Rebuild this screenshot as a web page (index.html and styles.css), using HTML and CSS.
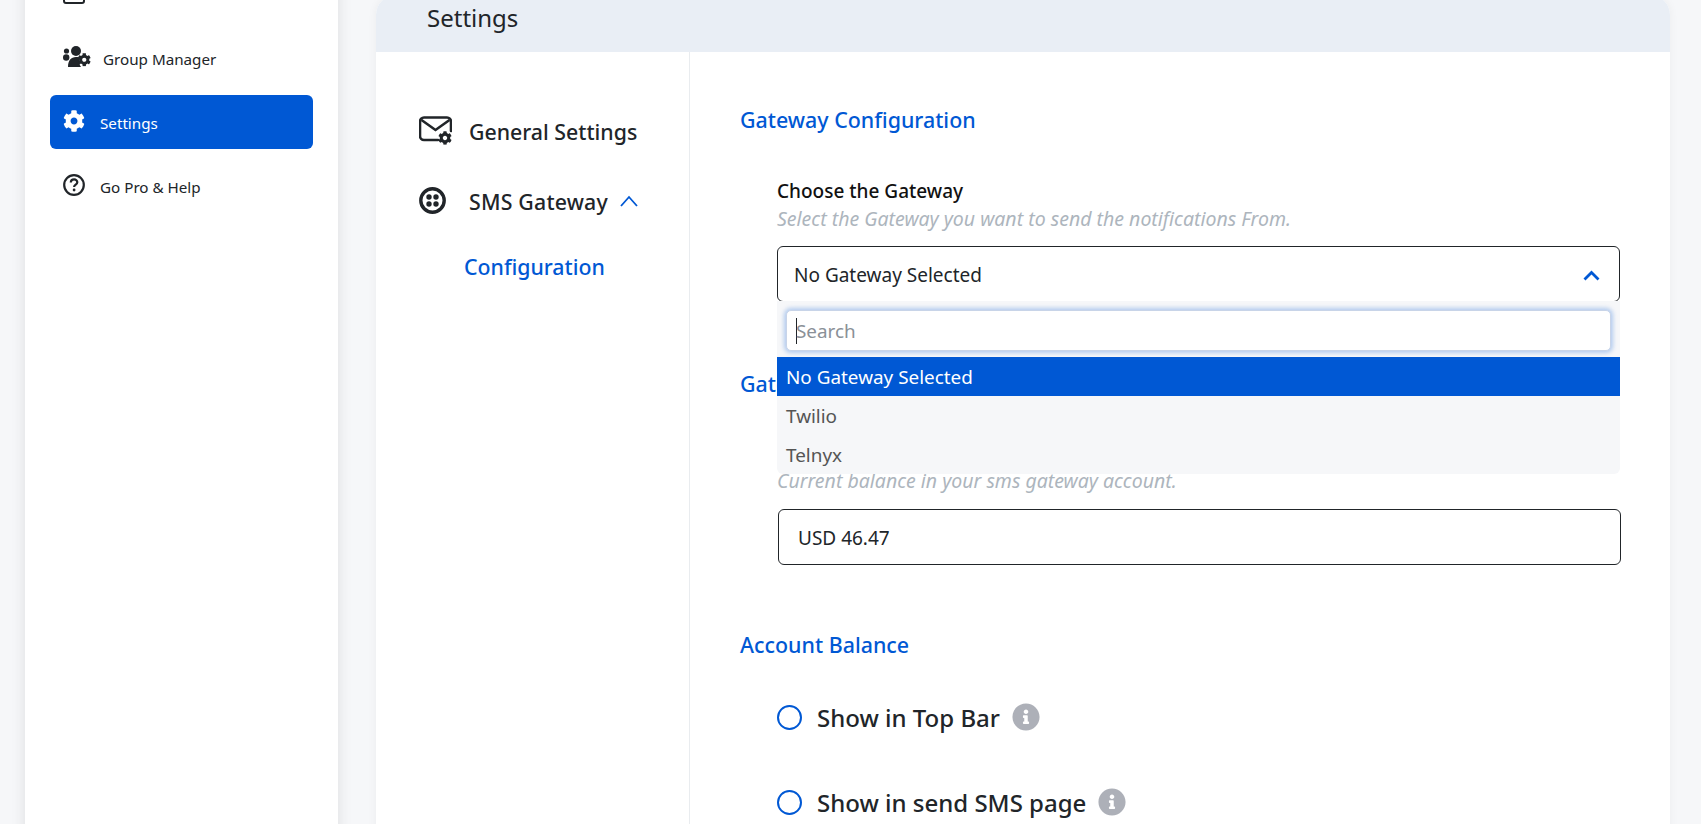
FILE: index.html
```html
<!DOCTYPE html>
<html lang="en">
<head>
    <meta charset="UTF-8">
    <meta name="viewport" content="width=device-width, initial-scale=1.0">
    <title>Settings</title>
    <link rel="stylesheet" href="styles.css">
</head>
<body>

<svg class="iconDefs" width="0" height="0">
    <symbol id="cog" viewBox="0 0 512 512">
        <path d="M487.4 315.7l-42.6-24.6c4.3-23.2 4.3-47 0-70.2l42.6-24.6c4.9-2.8 7.1-8.6 5.5-14-11.1-35.6-30-67.8-54.7-94.6-3.8-4.1-10-5.1-14.8-2.3L380.8 110c-17.9-15.4-38.5-27.3-60.8-35.1V25.8c0-5.6-3.9-10.5-9.4-11.7-36.7-8.2-74.3-7.8-109.2 0-5.5 1.2-9.4 6.1-9.4 11.7V75c-22.2 7.9-42.8 19.8-60.8 35.1L88.7 85.5c-4.9-2.8-11-1.9-14.8 2.3-24.7 26.7-43.6 58.9-54.7 94.6-1.7 5.4.6 11.2 5.5 14L67.3 221c-4.3 23.2-4.3 47 0 70.2l-42.6 24.6c-4.9 2.8-7.1 8.6-5.5 14 11.1 35.6 30 67.8 54.7 94.6 3.8 4.1 10 5.1 14.8 2.3l42.6-24.6c17.9 15.4 38.5 27.3 60.8 35.1v49.2c0 5.6 3.9 10.5 9.4 11.7 36.7 8.2 74.3 7.8 109.2 0 5.5-1.2 9.4-6.1 9.4-11.7v-49.2c22.2-7.9 42.8-19.8 60.8-35.1l42.6 24.6c4.9 2.8 11 1.9 14.8-2.3 24.7-26.7 43.6-58.9 54.7-94.6 1.5-5.5-.7-11.3-5.6-14.1zM256 336c-44.1 0-80-35.9-80-80s35.9-80 80-80 80 35.9 80 80-35.9 80-80 80z" fill="currentColor"/>
    </symbol>
    <symbol id="info" viewBox="0 0 512 512">
        <path d="M256 8C119 8 8 119.1 8 256c0 137 111 248 248 248s248-111 248-248C504 119.1 393 8 256 8zm0 110c23.2 0 42 18.8 42 42s-18.8 42-42 42-42-18.8-42-42 18.8-42 42-42zm56 254c0 6.6-5.4 12-12 12h-88c-6.6 0-12-5.4-12-12v-24c0-6.6 5.4-12 12-12h12v-64h-12c-6.6 0-12-5.4-12-12v-24c0-6.6 5.4-12 12-12h64c6.6 0 12 5.4 12 12v100h12c6.6 0 12 5.4 12 12v24z" fill="currentColor"/>
    </symbol>
</svg>

<div class="app">
    <aside class="sidebar">
        <a class="navItem">
            <svg class="navIcon" viewBox="0 0 22 22"><rect x="1" y="1" width="20" height="20" rx="2" fill="none" stroke="currentColor" stroke-width="2"/></svg>
            <span class="navLabel navLabelRaised">Message Log</span>
        </a>
        <a class="navItem">
            <svg class="navIcon groupIcon" viewBox="0 0 28 21">
                <circle cx="3.500" cy="5" r="2.600" fill="currentColor"/>
                <circle cx="3.200" cy="11.500" r="3.200" fill="currentColor"/>
                <circle cx="13" cy="5" r="5" fill="currentColor"/>
                <path d="M5 21c0-6.500 3-10 8-10 2 0 3.500.4 4.500 1-1.500 2.500-1.500 6.500.5 9z" fill="currentColor"/>
                <use href="#cog" x="14.500" y="7" width="13.500" height="13.500"/>
            </svg>
            <span class="navLabel">Group Manager</span>
        </a>
        <a class="navItem navItemActive">
            <svg class="navIcon" viewBox="0 0 22 22"><use href="#cog" width="22" height="22"/></svg>
            <span class="navLabel">Settings</span>
        </a>
        <a class="navItem">
            <svg class="navIcon" viewBox="0 0 22 22">
                <circle cx="11" cy="11" r="9.800" fill="none" stroke="currentColor" stroke-width="2.200"/>
                <path d="M7.800 8.600c0-2 1.500-3.200 3.300-3.200 1.900 0 3.200 1.200 3.200 2.800 0 2.400-3.200 2.400-3.200 4.800" fill="none" stroke="currentColor" stroke-width="2.200"/>
                <circle cx="11.100" cy="16" r="1.400" fill="currentColor"/>
            </svg>
            <span class="navLabel">Go Pro &amp; Help</span>
        </a>
    </aside>

    <main class="card">
        <header class="cardHeader">Settings</header>
        <div class="cardBody">
            <nav class="subNav">
                <div class="subNavItem">
                    <svg class="mailIcon" viewBox="0 0 33 29">
                        <path d="M19 24H5a4 4 0 0 1-4-4V5.500a4 4 0 0 1 4-4h23a4 4 0 0 1 4 4V15" fill="none" stroke="currentColor" stroke-width="2.600" stroke-linecap="round"/>
                        <path d="M2.500 4l14 10 14-10" fill="none" stroke="currentColor" stroke-width="2.600"/>
                        <use href="#cog" x="19" y="15" width="14" height="14"/>
                    </svg>
                    <span>General Settings</span>
                </div>
                <div class="subNavItem subNavGateway">
                    <svg class="twilioIcon" viewBox="0 0 27 27">
                        <circle cx="13.500" cy="13.500" r="11.700" fill="none" stroke="currentColor" stroke-width="3.400"/>
                        <circle cx="10" cy="10" r="2.700" fill="currentColor"/>
                        <circle cx="17" cy="10" r="2.700" fill="currentColor"/>
                        <circle cx="10" cy="17" r="2.700" fill="currentColor"/>
                        <circle cx="17" cy="17" r="2.700" fill="currentColor"/>
                    </svg>
                    <span>SMS Gateway</span>
                    <svg class="subNavChevron" viewBox="0 0 18 12"><path d="M1 11l8-9 8 9" fill="none" stroke="currentColor" stroke-width="1.800"/></svg>
                </div>
                <div class="subNavChild">Configuration</div>
            </nav>

            <section class="content">
                <h2 class="sectionTitle">Gateway Configuration</h2>

                <div class="field fieldGateway">
                    <div class="fieldLabel">Choose the Gateway</div>
                    <div class="fieldHint">Select the Gateway you want to send the notifications From.</div>
                    <div class="selectBox">
                        <span>No Gateway Selected</span>
                        <svg class="selectChevron" viewBox="0 0 17 11"><path d="M1.500 9.500l7-7 7 7" fill="none" stroke="currentColor" stroke-width="2.800"/></svg>
                    </div>
                    <div class="dropdown">
                        <div class="searchWrap">
                            <div class="searchInput"><i class="caret"></i>Search</div>
                        </div>
                        <div class="option optionSelected">No Gateway Selected</div>
                        <div class="option">Twilio</div>
                        <div class="option">Telnyx</div>
                    </div>
                </div>

                <h2 class="sectionTitle titleBalance">Gateway Balance</h2>
                <div class="field fieldBalance">
                    <div class="fieldHint">Current balance in your sms gateway account.</div>
                    <div class="textBox">USD 46.47</div>
                </div>

                <h2 class="sectionTitle titleAccount">Account Balance</h2>
                <div class="radioRow">
                    <i class="radio"></i>
                    <span>Show in Top Bar</span>
                    <svg class="infoIcon"><use href="#info" width="28" height="28"/></svg>
                </div>
                <div class="radioRow">
                    <i class="radio"></i>
                    <span>Show in send SMS page</span>
                    <svg class="infoIcon"><use href="#info" width="28" height="28"/></svg>
                </div>
            </section>
        </div>
    </main>
</div>

</body>
</html>
```

FILE: styles.css
```css
html, body {
    margin: 0;
    padding: 0;
    height: 824px;
    overflow: hidden;
    background-color: #f6f7f9;
    color: #212529;
    font-family: "Noto Sans", "Open Sans", sans-serif;
}

.iconDefs {
    position: absolute;
}

.app {
    display: flex;
    align-items: flex-start;
    gap: 38px;
    margin-top: -33px;
    margin-left: 25px;
}

/* Sidebar */
.sidebar {
    width: 263px;
    height: 920px;
    padding: 0 25px;
    display: flex;
    flex-direction: column;
    gap: 10px;
    flex-shrink: 0;
    background-color: white;
    box-shadow: 0 0 14px rgba(0, 0, 0, 0.1);
}

.navItem {
    height: 54px;
    padding: 1px 0 0 13px;
    box-sizing: border-box;
    display: flex;
    align-items: center;
    gap: 15px;
    border-radius: 6px;
    font-size: 15.2px;
}

.navItemActive {
    background-color: #0058d4;
    color: white;
}

.navIcon {
    width: 22px;
    height: 22px;
    margin-top: -4px;
    flex-shrink: 0;
}

.groupIcon {
    width: 28px;
    height: 21px;
    margin-right: -3px;
}

/* the first row runs off the top of the page */
.navLabelRaised {
    margin-top: -9px;
}

/* Main card */
.card {
    width: 1294px;
    height: 920px;
    margin-top: 28px;
    flex-shrink: 0;
    border-radius: 20px 20px 0 0;
    background-color: white;
    box-shadow: 0 0 10px rgba(0, 0, 0, 0.05);
    overflow: hidden;
}

.cardHeader {
    height: 57px;
    padding: 0 0 19px 51px;
    display: flex;
    align-items: flex-end;
    box-sizing: border-box;
    line-height: 30px;
    background-color: #e9eef5;
    font-size: 24px;
}

.cardBody {
    display: flex;
    height: 100%;
}

.subNav {
    width: 314px;
    padding: 61px 0 0 43px;
    box-sizing: border-box;
    border-right: 1px solid #e9ecef;
    font-size: 21.3px;
    font-weight: 500;
    flex-shrink: 0;
}

.subNavItem {
    height: 36px;
    display: flex;
    align-items: center;
}

.subNavItem span {
    margin-left: 17px;
}

.subNavGateway {
    margin-top: 34px;
}

.subNavGateway span {
    margin-left: 23px;
    letter-spacing: 0.2px;
}

.mailIcon {
    width: 33px;
    height: 29px;
    margin-top: -1px;
}

.twilioIcon {
    width: 27px;
    height: 27px;
    margin-top: -1px;
}

.subNavChevron {
    width: 18px;
    height: 12px;
    margin-left: 12px;
    color: #0058d4;
}

.subNavChild {
    margin: 33px 0 0 45px;
    color: #0058d4;
    line-height: 30px;
}

.content {
    padding: 54px 0 0 50px;
    flex: 1;
}

.sectionTitle {
    margin: 0;
    font-size: 21.4px;
    font-weight: 500;
    line-height: 28px;
    color: #0058d4;
}

.field {
    position: relative;
    margin-left: 37px;
    width: 843px;
}

.fieldGateway {
    margin-top: 45px;
}

.fieldLabel {
    font-size: 19px;
    font-weight: 500;
    color: #111;
    line-height: 24px;
}

.fieldHint {
    font-size: 19.5px;
    font-style: italic;
    color: #adb5bd;
    line-height: 24px;
    margin-top: 4px;
}

.selectBox,
.textBox {
    height: 56px;
    margin-top: 15px;
    padding: 2px 18px 0 16px;
    display: flex;
    align-items: center;
    justify-content: space-between;
    box-sizing: border-box;
    border: 1px solid #212529;
    border-radius: 6px;
    font-size: 19px;
}

.selectChevron {
    width: 17px;
    height: 11px;
    margin-right: 1px;
    color: #0058d4;
}

/* Open list, lies over the next section */
.dropdown {
    position: absolute;
    left: 0;
    right: 0;
    top: 122px;
    z-index: 5;
    padding-top: 9px;
    border-radius: 0 0 6px 6px;
    background-color: #f6f7f9;
    font-size: 18.9px;
    overflow: hidden;
}

.searchWrap {
    padding: 0 9px 6px;
}

.searchInput {
    height: 41px;
    padding-left: 9px;
    display: flex;
    align-items: center;
    box-sizing: border-box;
    border: 1px solid #c8d4e8;
    border-radius: 5px;
    background-color: white;
    box-shadow: 0 0 4px 2px rgba(0, 88, 212, 0.28);
    color: #8a9097;
}

.caret {
    width: 1px;
    height: 26px;
    margin-right: -1px;
    background-color: #212529;
}

.option {
    height: 39px;
    padding-left: 9px;
    display: flex;
    align-items: center;
    color: #555;
}

.optionSelected {
    background-color: #0058d4;
    color: white;
}

.titleBalance {
    margin-top: 68px;
}

.fieldBalance {
    margin-top: 71px;
    margin-left: 38px;
}

.fieldBalance .fieldHint {
    margin-left: -1px;
}

.fieldBalance .textBox {
    padding-left: 19px;
    margin-top: 16px;
}

.titleAccount {
    margin-top: 66px;
}

.radioRow {
    height: 40px;
    margin: 38px 0 0 37px;
    display: flex;
    align-items: center;
    font-size: 24px;
    font-weight: 500;
}

.radioRow + .radioRow {
    margin-top: 45px;
}

.radio {
    width: 25px;
    height: 25px;
    margin-right: 15px;
    box-sizing: border-box;
    border: 2px solid #0058d4;
    border-radius: 50%;
}

.infoIcon {
    width: 28px;
    height: 28px;
    margin-left: 12px;
    color: #adb0b8;
}
```
